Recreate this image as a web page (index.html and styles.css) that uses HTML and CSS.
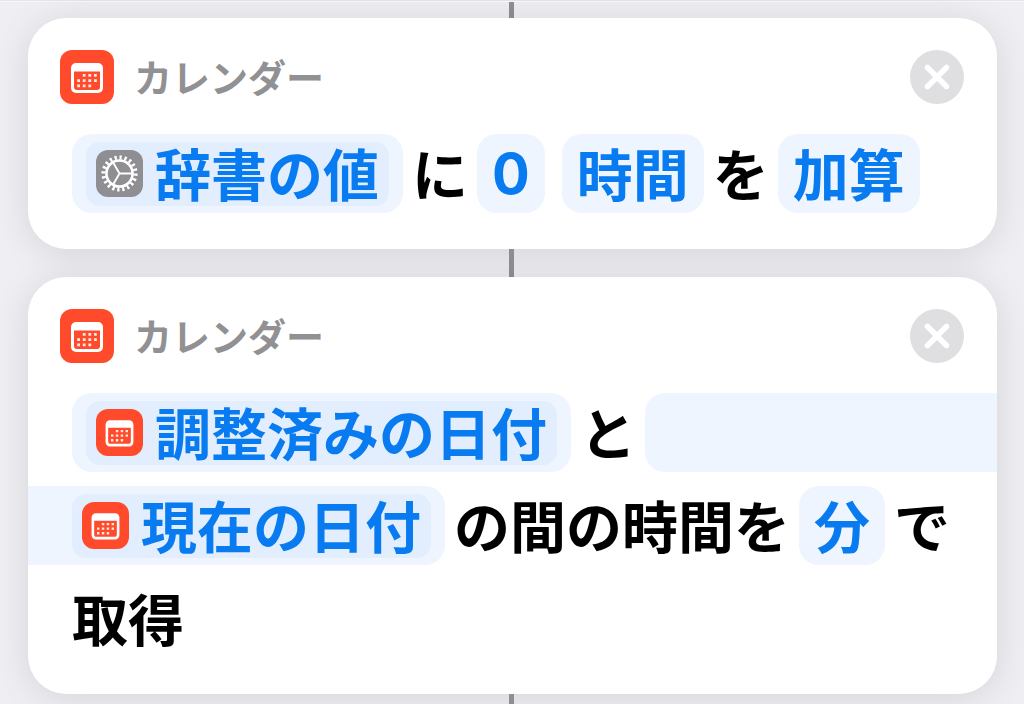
FILE: index.html
```html
<!DOCTYPE html>
<html lang="ja">
<head>
<meta charset="utf-8">
<meta name="viewport" content="width=device-width, initial-scale=1">
<title>ショートカット</title>
<link rel="stylesheet" href="styles.css">
</head>
<body>
<svg class="defs" aria-hidden="true">
  <symbol id="calendar" viewBox="0 0 54 54">
    <path fill="#fff" fill-rule="evenodd" d="M16 13h22a5 5 0 0 1 5 5v20a5 5 0 0 1-5 5H16a5 5 0 0 1-5-5V18a5 5 0 0 1 5-5zM14 21.500V37a3 3 0 0 0 3 3h20a3 3 0 0 0 3-3V21.500z"/>
    <g fill="#ffe9e2">
      <path d="M22.800 24h2.800v2.800h-2.800zM28.400 24h2.800v2.800h-2.800zM34 24h2.800v2.800H34zM17.200 29.200H20V32h-2.800zM22.800 29.200h2.800V32h-2.800zM28.400 29.200h2.800V32h-2.800zM34 29.200h2.800V32H34zM17.200 34.400H20v2.800h-2.800zM22.800 34.400h2.800v2.800h-2.800zM28.400 34.400h2.800v2.800h-2.800z"/>
    </g>
  </symbol>
  <symbol id="gear" viewBox="0 0 54 54">
    <g fill="none" stroke="#fff">
      <circle cx="27" cy="27" r="18.500" stroke-width="4.600" pathLength="200" stroke-dasharray="4.500 5.500"/>
      <circle cx="27" cy="27" r="15" stroke-width="3"/>
      <path stroke-width="2.200" d="M27 27h15M27 27l-7.500-13M27 27l-7.500 13"/>
    </g>
  </symbol>
  <symbol id="cross" viewBox="0 0 54 54">
    <path d="M17.500 17.500l19 19M36.500 17.500l-19 19" fill="none" stroke="#fff" stroke-width="5.500" stroke-linecap="round"/>
  </symbol>
</svg>
<div class="edge"></div>
<main class="flow">
  <div class="link link-top"></div>
  <section class="card">
    <header class="head">
      <svg class="app"><use href="#calendar"/></svg>
      <h2 class="title">カレンダー</h2>
      <button class="close" aria-label="削除"><svg><use href="#cross"/></svg></button>
    </header>
    <div class="body">
      <div class="row">
        <button class="pill holder"><span class="token"><svg class="app small gray"><use href="#gear"/></svg><span class="word">辞書の値</span></span></button>
        <span>に</span>
        <button class="pill number">0</button>
        <button class="pill">時間</button>
        <span>を</span>
        <button class="pill">加算</button>
      </div>
    </div>
  </section>
  <div class="link"></div>
  <section class="card">
    <header class="head">
      <svg class="app"><use href="#calendar"/></svg>
      <h2 class="title">カレンダー</h2>
      <button class="close" aria-label="削除"><svg><use href="#cross"/></svg></button>
    </header>
    <div class="body">
      <div class="row">
        <button class="pill holder"><span class="token"><svg class="app small"><use href="#calendar"/></svg><span class="word">調整済みの日付</span></span></button>
        <span>と</span>
        <span class="pill open-end"></span>
      </div>
      <div class="row continued">
        <button class="pill holder open-start"><span class="token"><svg class="app small"><use href="#calendar"/></svg><span class="word">現在の日付</span></span></button>
        <span>の間の時間を</span>
        <button class="pill">分</button>
        <span>で</span>
      </div>
      <div class="row"><span>取得</span></div>
    </div>
  </section>
  <div class="link"></div>
</main>
</body>
</html>
```
FILE: styles.css
```css
* { box-sizing: border-box; }

body {
  margin: 0;
  height: 100vh;
  overflow: hidden;
  background: #eeeef3;
  color: #000;
  font-family: "Noto Sans CJK JP", sans-serif;
}

.defs { position: absolute; width: 0; height: 0; }

.edge {
  height: 2px;
  border-bottom: 1px solid #f8f8fa;
  background: #e4e4e9;
}

.flow {
  display: flex;
  flex-direction: column;
  padding: 0 27px 0 28px;
}

.link {
  width: 5px;
  height: 28px;
  margin-left: 481px;
  background: #8e8e93;
}

.link-top { height: 16px; }

.card {
  border-radius: 38px;
  background: #fff;
  box-shadow: 0 4px 36px rgba(0, 0, 0, 0.11);
}

.head {
  display: flex;
  align-items: center;
  padding: 32px 33px 0 32px;
  height: 86px;
}

.app {
  width: 54px;
  height: 54px;
  border-radius: 12px;
  background: #ff4a2b;
  flex: none;
}

.small { width: 47px; height: 47px; }
.gray { background: #8e8e93; }

.title {
  margin: 0 auto 0 20px;
  padding-bottom: 3px;
  color: #919194;
  font-size: 38px;
  line-height: 51px;
  font-weight: 700;
}

.close {
  width: 54px;
  height: 54px;
  padding: 0;
  border: 0;
  border-radius: 50%;
  background: #dfdfe2;
}

.close svg { display: block; width: 54px; height: 54px; }

.body {
  display: flex;
  flex-direction: column;
  gap: 14px;
  padding: 30px 0 36px;
  font-size: 56px;
  line-height: 76px;
  font-weight: 700;
}

.row {
  display: flex;
  gap: 9px;
  height: 79px;
  padding-left: 44px;
  white-space: nowrap;
}

.continued { padding-left: 0; }

.pill {
  height: 79px;
  padding: 0 15px 3px;
  border: 0;
  border-radius: 20px;
  background: #eef5fe;
  color: #087bf0;
  font: inherit;
}

.pill + .pill { margin-left: 8px; }

.number { padding-bottom: 0; font-family: Inter, sans-serif; font-weight: 700; }

.holder { display: flex; align-items: center; padding: 0 14px; }

.token {
  display: flex;
  align-items: center;
  gap: 12px;
  height: 64px;
  padding: 0 10px;
  border-radius: 14px;
  background: #e2eefe;
}

.word { padding-bottom: 3px; }

.open-end { flex: 1; border-radius: 20px 0 0 20px; }
.open-start { padding-left: 44px; border-radius: 0 20px 20px 0; }
```
